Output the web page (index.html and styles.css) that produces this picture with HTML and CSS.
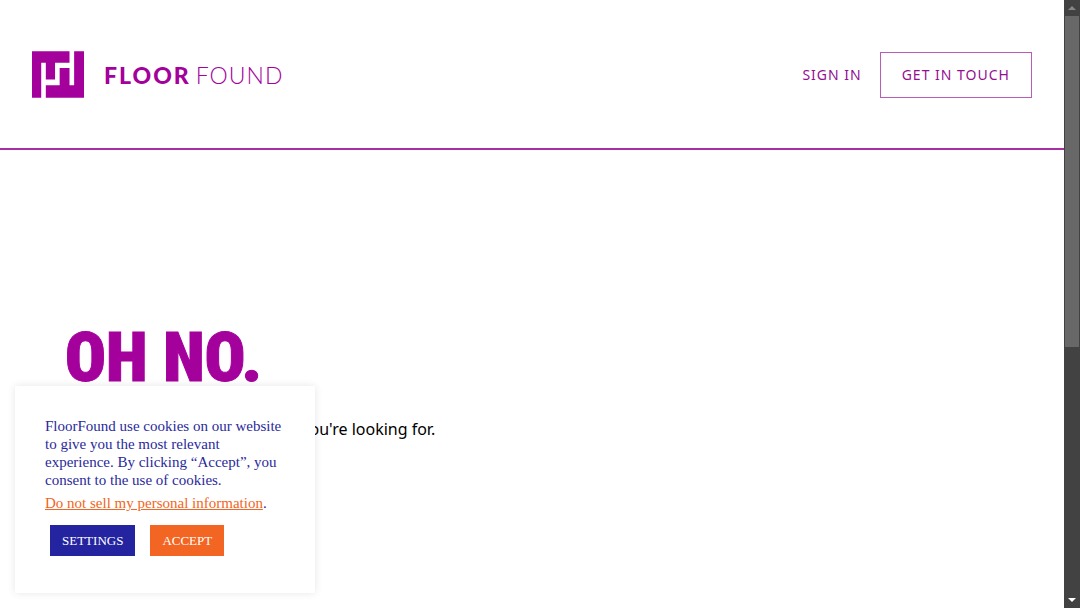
FILE: index.html
```html
<!DOCTYPE html>
<html lang="en">
<head>
<meta charset="utf-8">
<title>FloorFound</title>
<link rel="stylesheet" href="styles.css">
</head>
<body>
<div class="page">
  <header class="header">
    <a class="logo" href="#" aria-label="FloorFound home">
      <svg class="logo-mark" viewBox="0 0 158 141" aria-hidden="true">
        <path fill="#a4009c" d="M0 0H114V35H70V86H42V35H28V141H0Z"/>
        <path fill="#a4009c" d="M128 0H158V141H42V103H84V51H114V103H128Z"/>
      </svg>
      <span class="wordmark"><b class="heavy">FLOOR</b><span class="light">FOUND</span></span>
    </a>
    <nav class="nav">
      <a class="nav-link" href="#">SIGN IN</a>
      <a class="nav-link boxed" href="#">GET IN TOUCH</a>
    </nav>
  </header>
  <main class="main">
    <h1 class="title">OH NO.</h1>
    <p class="message">We can't seem to find the page you're looking for.</p>
  </main>
</div>
<div class="scrollbar" aria-hidden="true">
  <span class="arrow up"></span>
  <span class="track"><span class="thumb"></span></span>
  <span class="arrow down"></span>
</div>
<section class="cookie" aria-label="Cookie notice">
  <p class="cookie-text">FloorFound use cookies on our website to give you the most relevant experience. By clicking “Accept”, you consent to the use of cookies.</p>
  <p class="cookie-text"><a class="cookie-link" href="#">Do not sell my personal information</a>.</p>
  <div class="cookie-actions">
    <button class="btn settings" type="button">SETTINGS</button>
    <button class="btn accept" type="button">ACCEPT</button>
  </div>
</section>
</body>
</html>
```
FILE: styles.css
```css
* { box-sizing: border-box; }
body {
  margin: 0;
  display: flex;
  height: 100vh;
  overflow: hidden;
  background: #fff;
  font-family: "Noto Sans", "Open Sans", sans-serif;
}
.page { flex: 1; min-width: 0; }
.header {
  display: flex;
  align-items: center;
  justify-content: space-between;
  padding: 51px 32px 50px;
  border-bottom: 2px solid #a82fa4;
}
.logo {
  display: flex;
  align-items: center;
  gap: 20px;
  color: #a4009c;
  text-decoration: none;
}
.logo-mark { width: 52px; height: 47px; }
.wordmark { display: flex; gap: 5px; font: 23px/28px Lato, sans-serif; letter-spacing: 1px; }
.heavy { font-weight: 900; letter-spacing: 2px; }
.light { font-weight: 300; }
.nav { display: flex; align-items: center; gap: 18px; }
.nav-link {
  color: #94108f;
  font-size: 14px;
  line-height: 20px;
  letter-spacing: 1px;
  text-decoration: none;
}
.boxed { padding: 12px 21px; border: 1px solid #b75db5; }
.main { padding: 170px 65px 0; }
.title {
  margin: 0;
  color: #a4009c;
  font: 900 68px/76px "Roboto Condensed", Roboto, sans-serif;
  -webkit-text-stroke: 1px #a4009c;
}
.message { margin: 20px 0 0; font-size: 16px; line-height: 26px; color: #000; }
.cookie {
  position: absolute;
  left: 15px;
  bottom: 15px;
  width: 300px;
  padding: 31px 30px 37px;
  background: #fff;
  box-shadow: 0 0 8px rgba(0, 0, 0, 0.1);
  color: #2a2a9c;
  font-family: "Liberation Serif", serif;
}
.cookie-text { margin: 0 0 5px; font-size: 15px; line-height: 18px; }
.cookie-link { color: #f26522; }
.cookie-actions { display: flex; gap: 15px; margin: 13px 5px 0; }
.btn {
  border: 0;
  padding: 8px 12px;
  color: #fff;
  font: 13px/15px "Liberation Serif", serif;
}
.settings { background: #2424a0; }
.accept { background: #f26522; }
.scrollbar { display: flex; flex-direction: column; width: 16px; background: #424242; }
.arrow { height: 16px; display: flex; align-items: center; justify-content: center; }
.arrow::before { content: ""; border: 4px solid transparent; }
.up::before { border-top: 0; border-bottom-color: #858585; }
.down::before { border-bottom: 0; border-top-color: #fff; }
.track { flex: 1; padding: 0 1px; }
.thumb { display: block; height: 57.5%; background: #686868; }
```
